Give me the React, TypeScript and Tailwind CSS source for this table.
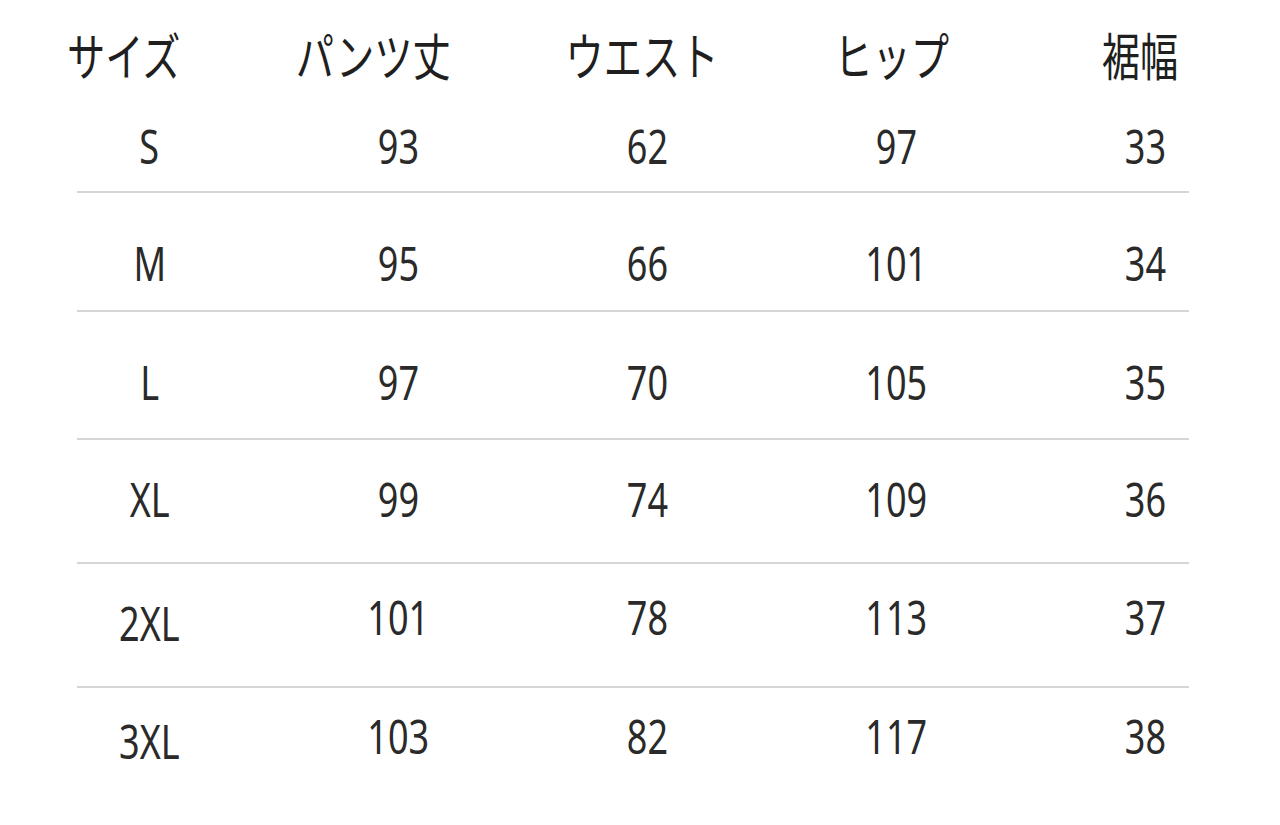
import React from 'react';

// Cabeceras de la tabla (con su desplazamiento respecto al centro de columna)
const headers = [
  { text: 'サイズ', pad: 'pr-[51px]' },
  { text: 'パンツ丈', pad: 'pr-[51px]' },
  { text: 'ウエスト', pad: 'pr-[11px]' },
  { text: 'ヒップ', pad: 'pr-[9px]' },
  { text: '裾幅', pad: 'pr-[11px]' },
];

// Filas: talla + medidas, con el espaciado vertical de cada una
const rows = [
  { size: 'S', values: ['93', '62', '97', '33'], top: 'pt-[42px]', bottom: 'mt-[21px]', label: '' },
  { size: 'M', values: ['95', '66', '101', '34'], top: 'pt-[46px]', bottom: 'mt-[23px]', label: '' },
  { size: 'L', values: ['97', '70', '105', '35'], top: 'pt-[46px]', bottom: 'mt-[32px]', label: '' },
  { size: 'XL', values: ['99', '74', '109', '36'], top: 'pt-[35px]', bottom: 'mt-[39px]', label: '' },
  { size: '2XL', values: ['101', '78', '113', '37'], top: 'pt-[29px]', bottom: 'mt-[45px]', label: 'translate-y-[6px]' },
  { size: '3XL', values: ['103', '82', '117', '38'], top: 'pt-[24px]', bottom: '', label: 'translate-y-[5px]' },
];

const Cell = ({ children, extra = '' }: { children: React.ReactNode; extra?: string }) => (
  <div className={`flex justify-center h-[48px] leading-[48px] ${extra}`}>
    <span className="inline-block scale-x-75 whitespace-nowrap">{children}</span>
  </div>
);

const App = () => {
  return (
    <div
      className="w-[1280px] h-[825px] bg-white text-[48px] text-[#2a2a2a] pt-[32px] overflow-hidden"
      style={{ fontFamily: '"Noto Sans", "Noto Sans CJK JP", sans-serif' }}
    >
      {/* Cabecera */}
      <div className="grid grid-cols-5 w-[1245px] ml-[25px] text-[51px] text-[#1f1f1f]">
        {headers.map(({ text, pad }) => (
          <Cell key={text} extra={pad}>
            {text}
          </Cell>
        ))}
      </div>

      {/* Filas de medidas */}
      {rows.map(({ size, values, top, bottom, label }, i) => (
        <div key={size} className={top}>
          <div className="grid grid-cols-5 w-[1245px] ml-[25px]">
            <Cell extra={label}>{size}</Cell>
            {values.map((v, j) => (
              <Cell key={j}>{v}</Cell>
            ))}
          </div>
          {i < rows.length - 1 && (
            <div className={`${bottom} ml-[77px] w-[1112px] h-[2px] bg-[#d6d6d6]`} />
          )}
        </div>
      ))}
    </div>
  );
};

export default App;
